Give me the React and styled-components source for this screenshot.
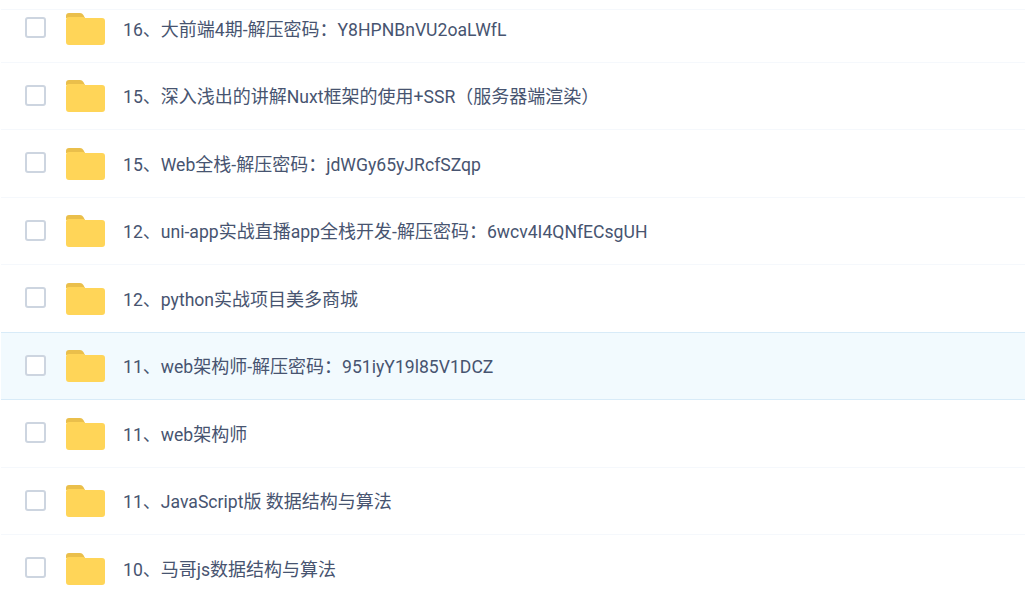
import React from 'react';
import styled, { createGlobalStyle } from 'styled-components';

const GlobalStyle = createGlobalStyle`
  html, body {
    margin: 0;
    padding: 0;
    background: #fff;
  }
`;

const Page = styled.div`
  position: relative;
  width: 1025px;
  height: 602px;
  overflow: hidden;
  background: #fff;
  font-family: Roboto, "Noto Sans CJK SC", sans-serif;
`;

const TopEdge = styled.div`
  position: absolute;
  top: 0;
  left: 1px;
  right: 0;
  height: 9px;
  background: #fff;
  border-bottom: 1px solid #f5f8fc;
`;

const List = styled.ul`
  list-style: none;
  margin: -5px 0 0;
  padding: 0 0 0 1px;
`;

const Row = styled.li`
  display: flex;
  align-items: center;
  box-sizing: border-box;
  height: 67.5px;
  padding-left: 24px;
  border-bottom: 1px solid ${(p) => (p.$active ? '#d8ebf8' : '#f5f8fc')};
  background: ${(p) => (p.$active ? '#f2fafe' : '#fff')};
  box-shadow: ${(p) => (p.$active ? '0 -1px 0 #d8ebf8' : 'none')};
`;

const Check = styled.span`
  box-sizing: border-box;
  flex: none;
  width: 21px;
  height: 21px;
  margin-top: -1px;
  border: 2px solid #cdd5e0;
  border-radius: 3px;
  background: #fff;
`;

const FolderIcon = styled.svg`
  flex: none;
  width: 39px;
  height: 32px;
  margin: 1px 18px 0 20px;
`;

const Name = styled.span`
  margin-top: -1px;
  font-size: 18px;
  color: #475470;
  white-space: nowrap;
`;

const Latin = styled.span`
  font-size: 17.6px;
`;

const folders = [
  '16、大前端4期-解压密码：Y8HPNBnVU2oaLWfL',
  '15、深入浅出的讲解Nuxt框架的使用+SSR（服务器端渲染）',
  '15、Web全栈-解压密码：jdWGy65yJRcfSZqp',
  '12、uni-app实战直播app全栈开发-解压密码：6wcv4I4QNfECsgUH',
  '12、python实战项目美多商城',
  '11、web架构师-解压密码：951iyY19l85V1DCZ',
  '11、web架构师',
  '11、JavaScript版 数据结构与算法',
  '10、马哥js数据结构与算法',
];

const Folder = () => (
  <FolderIcon viewBox="0 0 39 32">
    <path d="M0 3a3 3 0 0 1 3-3h11a4 4 0 0 1 3.4 2L19 5H0z" fill="#eabf4b" />
    <path d="M0 7a3 3 0 0 1 3-3h14.5l1.5 1h17a3 3 0 0 1 3 3v21a3 3 0 0 1-3 3H3a3 3 0 0 1-3-3z" fill="#ffd558" />
  </FolderIcon>
);

// latin runs sit a touch smaller than the CJK around them
const splitName = (name) =>
  name.split(/([\x20-\x7e]+)/).map((part, i) =>
    i % 2 ? <Latin key={i}>{part}</Latin> : part
  );

export default function App() {
  return (
    <Page>
      <GlobalStyle />
      <List>
        {folders.map((name, i) => (
          <Row key={name} $active={i === 5}>
            <Check />
            <Folder />
            <Name>{splitName(name)}</Name>
          </Row>
        ))}
      </List>
      <TopEdge />
    </Page>
  );
}
